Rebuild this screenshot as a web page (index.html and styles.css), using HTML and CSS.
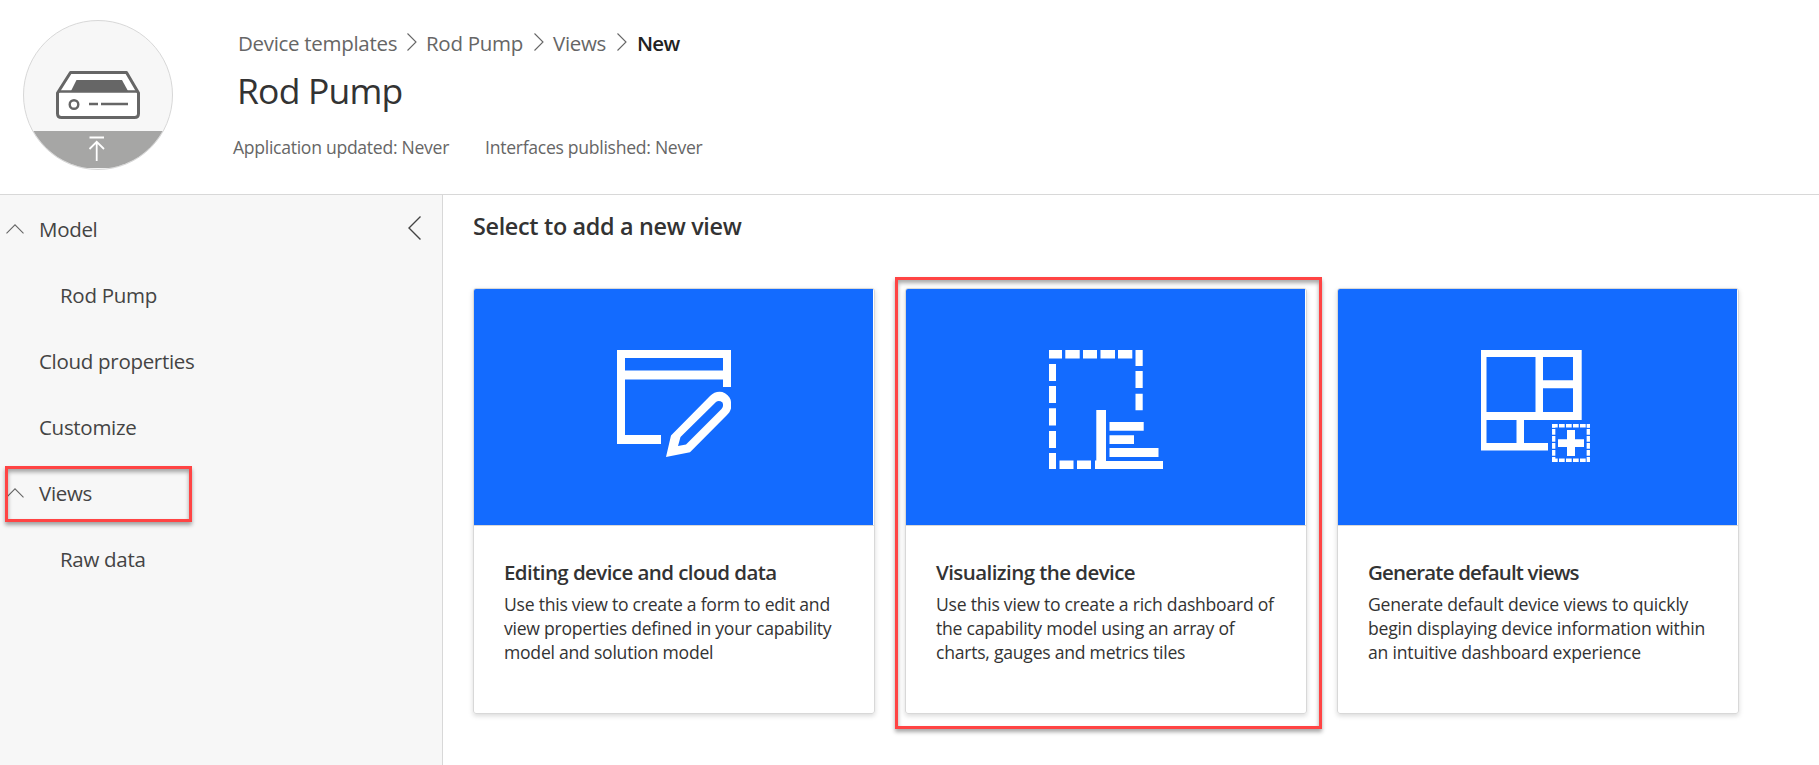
FILE: index.html
```html
<!DOCTYPE html>
<html lang="en">
<head>
<meta charset="utf-8">
<title>Rod Pump - New view</title>
<link rel="stylesheet" href="styles.css">
</head>
<body>
<header class="header">
  <div class="avatar">
    <svg class="avatar-art" viewBox="0 0 148 148" width="148" height="148">
      <rect x="0" y="110" width="148" height="37" fill="#a6a6a5"/>
      <path d="M46.500 51.500H102.500L114.500 72V92.500Q114.500 96.500 110.500 96.500H37.500Q33.500 96.500 33.500 92.500V72Z" fill="#fff" stroke="#666" stroke-width="3" stroke-linejoin="round"/>
      <path d="M52.500 59H98L104 70H47Z" fill="#666"/>
      <path d="M34 70.500H114" stroke="#666" stroke-width="2.500"/>
      <circle cx="50" cy="83.500" r="4.300" fill="none" stroke="#666" stroke-width="2.400"/>
      <path d="M65 83H74M77 83H104" stroke="#666" stroke-width="2.600"/>
      <path d="M65.500 116.500H80M72.700 140V122M65.500 128L72.700 120.800L80 128" fill="none" stroke="#fff" stroke-width="1.800"/>
    </svg>
  </div>
  <div class="heading">
    <nav class="crumbs">
      <a class="crumb crumb-templates">Device templates</a>
      <svg class="sep" viewBox="0 0 10 18"><path d="M.500.500L9 9L.500 17.500"/></svg>
      <a class="crumb crumb-pump">Rod Pump</a>
      <svg class="sep" viewBox="0 0 10 18"><path d="M.500.500L9 9L.500 17.500"/></svg>
      <a class="crumb crumb-views">Views</a>
      <svg class="sep" viewBox="0 0 10 18"><path d="M.500.500L9 9L.500 17.500"/></svg>
      <span class="crumb crumb-current">New</span>
    </nav>
    <h1 class="title">Rod Pump</h1>
    <div class="meta">
      <span class="meta-item">Application updated: Never</span>
      <span class="meta-item">Interfaces published: Never</span>
    </div>
  </div>
</header>
<div class="body">
  <aside class="sidebar">
    <svg class="collapse" viewBox="0 0 13 24"><path d="M12.500.500L1 12L12.500 23.500"/></svg>
    <ul class="nav">
      <li class="nav-item"><svg class="caret" viewBox="0 0 18 10"><path d="M.500 9.300L9 .800L17.500 9.300"/></svg>Model</li>
      <li class="nav-item nav-child">Rod Pump</li>
      <li class="nav-item">Cloud properties</li>
      <li class="nav-item">Customize</li>
      <li class="nav-item"><svg class="caret" viewBox="0 0 18 10"><path d="M.500 9.300L9 .800L17.500 9.300"/></svg>Views<span class="callout callout-nav"></span></li>
      <li class="nav-item nav-child">Raw data</li>
    </ul>
  </aside>
  <main class="main">
    <h2 class="section-title">Select to add a new view</h2>
    <div class="cards">
      <article class="card">
        <div class="card-art">
          <svg class="art" width="114" height="107" viewBox="0 0 114 107" fill="#fff">
            <path d="M0 0H114V37H106V29.500H8V85H44V94H0ZM8 8V20.500H106V8Z" fill-rule="evenodd"/>
            <path d="M49 107L54 85.500L93 46C97 42 103 40.500 108 43.200C112 45.500 114 49 114 52V58.500C113 61.500 112 63 110 65L73 102.300ZM61 96L69 94.500L104.500 59Q107 56 105.500 52.500Q102 50 99 52L63.500 87Z" fill-rule="evenodd"/>
          </svg>
        </div>
        <div class="card-body">
          <h3 class="card-title">Editing device and cloud data</h3>
          <p class="card-text">Use this view to create a form to edit and<br>view properties defined in your capability<br>model and solution model</p>
        </div>
      </article>
      <article class="card">
        <div class="card-art">
          <svg class="art" width="114" height="119" viewBox="0 0 114 119" fill="#fff">
            <path d="M0 0H13V8.500H0ZM16.300 0H30.700V8.500H16.300ZM34 0H48V8.500H34ZM51.500 0H66V8.500H51.500ZM69 0H83.300V8.500H69Z"/>
            <path d="M86.500 0H93.700V16H86.500ZM86.500 21H93.700V38H86.500ZM86.500 43.700H93.700V60.300H86.500Z"/>
            <path d="M0 14H7V31H0ZM0 36H7V53H0ZM0 58.300H7V75.500H0ZM0 81H7V98H0ZM0 103H7V119H0ZM10.500 110.500H24.500V119H10.500ZM28 110.500H42V119H28Z"/>
            <path d="M47.300 60H57V111H114V119H46V110.500H47.300ZM60.500 72H94.700V80.700H60.500ZM60.500 85.300H85V94H60.500ZM60.500 98H109.500V107H60.500Z"/>
          </svg>
        </div>
        <div class="card-body">
          <h3 class="card-title">Visualizing the device</h3>
          <p class="card-text">Use this view to create a rich dashboard of<br>the capability model using an array of<br>charts, gauges and metrics tiles</p>
        </div>
        <span class="callout callout-card"></span>
      </article>
      <article class="card card-default">
        <div class="card-art">
          <svg class="art" width="114" height="113" viewBox="0 0 114 113" fill="#fff">
            <path d="M0 0H100.700V70H43V93H67V100.500H0ZM5.500 7V62H54.500V7ZM62 7V30.300H92V7ZM62 38.300V62H92V38.300ZM5.500 70V93H35.500V70Z" fill-rule="evenodd"/>
            <path d="M86 80H94V89.300H103V97H94V106H86V97H77V89.300H86Z"/>
            <path d="M71 75.700H109M71 110.300H109" fill="none" stroke="#fff" stroke-width="3.500" stroke-dasharray="5.700 1.300"/>
            <path d="M72.700 74V112M107.300 74V112" fill="none" stroke="#fff" stroke-width="3.300" stroke-dasharray="5.700 1.300" stroke-dashoffset="2"/>
          </svg>
        </div>
        <div class="card-body">
          <h3 class="card-title">Generate default views</h3>
          <p class="card-text">Generate default device views to quickly<br>begin displaying device information within<br>an intuitive dashboard experience</p>
        </div>
      </article>
    </div>
  </main>
</div>
</body>
</html>
```
FILE: styles.css
```css
* {
  box-sizing: border-box;
}

body {
  margin: 0;
  height: 765px;
  display: flex;
  flex-direction: column;
  overflow: hidden;
  background: #fff;
  color: #333;
  font-family: "Open Sans", "Noto Sans", sans-serif;
}

h1, h2, h3, p, ul {
  margin: 0;
  padding: 0;
}

.header {
  display: flex;
  flex: none;
  height: 195px;
  padding: 20px 0 0 23px;
  border-bottom: 1px solid #d8d8d8;
}

.avatar {
  flex: none;
  width: 150px;
  height: 150px;
  overflow: hidden;
  border: 1px solid #d8d8d8;
  border-radius: 50%;
  background: #f7f7f7;
}

.avatar-art {
  display: block;
}

.heading {
  padding: 9px 0 0 60px;
  white-space: nowrap;
}

.crumbs {
  display: flex;
  align-items: center;
  height: 28px;
  padding-left: 5px;
  font-size: 20.5px;
  line-height: 28px;
  letter-spacing: -0.3px;
  color: #666;
}

.crumb-templates { width: 169px; }
.crumb-pump { width: 108px; margin-left: 9px; }
.crumb-views { width: 64px; margin-left: 9px; }
.crumb-current {
  margin-left: 10px;
  font-weight: 600;
  letter-spacing: -0.7px;
  color: #222;
}

.sep {
  flex: none;
  width: 10px;
  height: 18px;
  margin-top: -3px;
}

.sep path,
.caret path,
.collapse path {
  fill: none;
  stroke: #666;
  stroke-width: 1.1;
}

.title {
  margin-top: 9px;
  padding-left: 4px;
  font-size: 35.5px;
  font-weight: 400;
  line-height: 48px;
  letter-spacing: -0.8px;
}

.meta {
  display: flex;
  gap: 36px;
  margin-top: 21px;
  font-size: 17.6px;
  line-height: 24px;
  letter-spacing: -0.29px;
  color: #666;
}

.body {
  display: flex;
  flex: 1;
}

.sidebar {
  position: relative;
  flex: none;
  width: 443px;
  padding-top: 1px;
  border-right: 1px solid #d8d8d8;
  background: #f7f7f7;
}

.collapse {
  position: absolute;
  top: 21px;
  right: 21px;
  width: 13px;
  height: 24px;
}

.collapse path {
  stroke: #444;
  stroke-width: 1.4;
}

.nav {
  list-style: none;
}

.nav-item {
  position: relative;
  height: 66px;
  padding-left: 39px;
  font-size: 20.5px;
  line-height: 66px;
  letter-spacing: -0.3px;
  color: #444;
}

.nav-child {
  padding-left: 60px;
}

.caret {
  position: absolute;
  top: 28px;
  left: 6px;
  width: 18px;
  height: 10px;
}

.callout {
  position: absolute;
  border: 3px solid #ff4444;
  box-shadow: 0 3px 4px rgba(0, 0, 0, 0.35), inset 0 3px 4px rgba(0, 0, 0, 0.35);
  pointer-events: none;
}

.callout-nav {
  top: 6px;
  left: 5px;
  width: 187px;
  height: 56px;
}

.callout-card {
  top: -12px;
  left: -11px;
  width: 427px;
  height: 452px;
}

.main {
  padding: 15px 0 0 30px;
}

.section-title {
  font-size: 23.4px;
  font-weight: 600;
  line-height: 32px;
  letter-spacing: -0.33px;
}

.cards {
  display: flex;
  gap: 30px;
  margin-top: 46px;
}

.card {
  position: relative;
  width: 402px;
  height: 426px;
  border: 1px solid #d8d8d8;
  border-radius: 3px;
  box-shadow: 0 2px 5px rgba(0, 0, 0, 0.15);
}

.card-art {
  display: flex;
  justify-content: center;
  width: 399px;
  height: 236px;
  padding-top: 61px;
  background: #136bff;
  border-radius: 2px 0 0 0;
}

.art {
  flex: none;
}

.card-body {
  padding: 32px 0 0 30px;
  border-top: 1px solid #d8d8d8;
  white-space: nowrap;
}

.card-title {
  font-size: 20.5px;
  font-weight: 600;
  line-height: 28px;
  letter-spacing: -0.57px;
}

.card-text {
  margin-top: 6px;
  font-size: 17.6px;
  line-height: 24px;
  letter-spacing: -0.25px;
}

.card-default .card-title {
  letter-spacing: -0.82px;
}

.card-default .card-text {
  letter-spacing: -0.2px;
}
```
